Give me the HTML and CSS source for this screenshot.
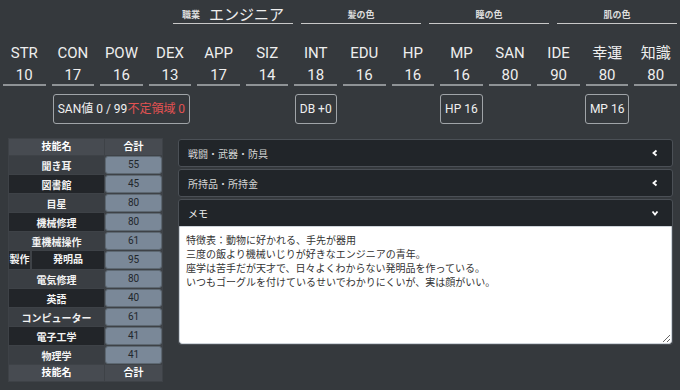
FILE: index.html
```html
<!DOCTYPE html>
<html lang="ja">
<head>
    <meta charset="UTF-8">
    <meta name="viewport" content="width=device-width, initial-scale=1.0">
    <title>キャラクターシート</title>
    <link rel="stylesheet" href="styles.css">
</head>
<body>

<div class="profile">
    <div class="field">
        <span class="field-label">職業</span>
        <span class="field-value">エンジニア</span>
    </div>
    <div class="field"><span class="field-label">髪の色</span></div>
    <div class="field"><span class="field-label">瞳の色</span></div>
    <div class="field"><span class="field-label">肌の色</span></div>
</div>

<div class="stats">
    <div class="stat"><div class="stat-name">STR</div><div class="stat-value">10</div></div>
    <div class="stat"><div class="stat-name">CON</div><div class="stat-value">17</div></div>
    <div class="stat"><div class="stat-name">POW</div><div class="stat-value">16</div></div>
    <div class="stat"><div class="stat-name">DEX</div><div class="stat-value">13</div></div>
    <div class="stat"><div class="stat-name">APP</div><div class="stat-value">17</div></div>
    <div class="stat"><div class="stat-name">SIZ</div><div class="stat-value">14</div></div>
    <div class="stat"><div class="stat-name">INT</div><div class="stat-value">18</div></div>
    <div class="stat"><div class="stat-name">EDU</div><div class="stat-value">16</div></div>
    <div class="stat"><div class="stat-name">HP</div><div class="stat-value">16</div></div>
    <div class="stat"><div class="stat-name">MP</div><div class="stat-value">16</div></div>
    <div class="stat"><div class="stat-name">SAN</div><div class="stat-value">80</div></div>
    <div class="stat"><div class="stat-name">IDE</div><div class="stat-value">90</div></div>
    <div class="stat"><div class="stat-name">幸運</div><div class="stat-value">80</div></div>
    <div class="stat"><div class="stat-name">知識</div><div class="stat-value">80</div></div>
</div>

<div class="badges">
    <div class="badge badge-san">SAN値 0 / 99<span class="danger">不定領域 0</span></div>
    <div class="badge badge-db">DB +0</div>
    <div class="badge badge-hp">HP 16</div>
    <div class="badge badge-mp">MP 16</div>
</div>

<div class="main">
    <table class="skills">
        <thead>
            <tr><th>技能名</th><th>合計</th></tr>
        </thead>
        <tbody>
            <tr class="light"><td class="name">聞き耳</td><td><div class="total">55</div></td></tr>
            <tr class="dark"><td class="name">図書館</td><td><div class="total">45</div></td></tr>
            <tr class="light"><td class="name">目星</td><td><div class="total">80</div></td></tr>
            <tr class="dark"><td class="name">機械修理</td><td><div class="total">80</div></td></tr>
            <tr class="light"><td class="name">重機械操作</td><td><div class="total">61</div></td></tr>
            <tr class="split">
                <td class="name"><div class="name-parts"><span class="kind">製作</span><span class="sub">発明品</span></div></td>
                <td><div class="total">95</div></td>
            </tr>
            <tr class="light"><td class="name">電気修理</td><td><div class="total">80</div></td></tr>
            <tr class="dark"><td class="name">英語</td><td><div class="total">40</div></td></tr>
            <tr class="light"><td class="name">コンピューター</td><td><div class="total">61</div></td></tr>
            <tr class="dark"><td class="name">電子工学</td><td><div class="total">41</div></td></tr>
            <tr class="light"><td class="name">物理学</td><td><div class="total">41</div></td></tr>
        </tbody>
        <tfoot>
            <tr><th>技能名</th><th>合計</th></tr>
        </tfoot>
    </table>

    <div class="accordion">
        <div class="acc-item">
            <div class="acc-header">
                <span>戦闘・武器・防具</span>
                <svg class="chevron" width="8" height="8" viewBox="0 0 8 8"><polyline points="5.5,1.5 2.5,4 5.5,6.5" fill="none" stroke="#fff" stroke-width="1.8"/></svg>
            </div>
        </div>
        <div class="acc-item">
            <div class="acc-header">
                <span>所持品・所持金</span>
                <svg class="chevron" width="8" height="8" viewBox="0 0 8 8"><polyline points="5.5,1.5 2.5,4 5.5,6.5" fill="none" stroke="#fff" stroke-width="1.8"/></svg>
            </div>
        </div>
        <div class="acc-item open">
            <div class="acc-header">
                <span>メモ</span>
                <svg class="chevron" width="8" height="8" viewBox="0 0 8 8"><polyline points="1.5,2.5 4,5.5 6.5,2.5" fill="none" stroke="#fff" stroke-width="1.8"/></svg>
            </div>
            <textarea class="memo" readonly>特徴表：動物に好かれる、手先が器用
三度の飯より機械いじりが好きなエンジニアの青年。
座学は苦手だが天才で、日々よくわからない発明品を作っている。
いつもゴーグルを付けているせいでわかりにくいが、実は顔がいい。</textarea>
        </div>
    </div>
</div>

</body>
</html>
```

FILE: styles.css
```css
body {
    margin: 0;
    background-color: #35393d;
    color: #eee;
    font-family: Roboto, "Noto Sans CJK JP", sans-serif;
}

/* profile line */
.profile {
    display: flex;
    justify-content: flex-end;
    gap: 8px;
    padding-right: 3px;
}
.field {
    box-sizing: border-box;
    width: 120px;
    height: 24px;
    padding-top: 6px;
    border-bottom: 1px solid #c8c8c8;
    display: flex;
    align-items: center;
    justify-content: center;
    gap: 9px;
}
.field-label {
    font-size: 9px;
    font-weight: bold;
    color: #ddd;
}
.field-value {
    font-size: 15px;
    line-height: 18px;
    color: #eee;
}

/* stats */
.stats {
    display: grid;
    grid-template-columns: repeat(14, 1fr);
    margin-top: 20px;
}
.stat {
    padding: 0 3px;
    text-align: center;
}
.stat-name {
    font-size: 15px;
    line-height: 18px;
}
.stat-value {
    margin-top: 4px;
    font-size: 15px;
    line-height: 18px;
    border-bottom: 2px solid #8f9396;
}

.badges {
    display: grid;
    grid-template-columns: repeat(14, 1fr);
    margin-top: 8px;
}
.badge {
    justify-self: center;
    box-sizing: border-box;
    height: 30px;
    line-height: 28px;
    padding: 0 4px;
    border: 1px solid #a0a4a8;
    border-radius: 3px;
    font-size: 12px;
    color: #f0f0f0;
}
.badge-san { grid-column: 1 / 6; }
.badge-db { grid-column: 6 / 9; }
.badge-hp { grid-column: 9 / 12; }
.badge-mp { grid-column: 12 / 15; }
.danger {
    color: #e35252;
}

/* lower part */
.main {
    display: flex;
    gap: 15px;
    padding: 0 7px 0 8px;
    margin-top: 14px;
}

.skills {
    width: 155px;
    flex-shrink: 0;
    border-collapse: separate;
    border-spacing: 1px;
    background-color: #3e4247;
    font-size: 10px;
    table-layout: fixed;
}
.skills th {
    height: 16px;
    padding: 0;
    background-color: #474b51;
    color: #fff;
    font-weight: bold;
    line-height: 16px;
}
.skills th:first-child {
    width: 95px;
}
.skills td {
    height: 18px;
    padding: 0;
    text-align: center;
}
.skills .name {
    font-weight: bold;
    color: #f2f2f2;
}
.skills .light .name {
    background-color: #3a3e43;
}
.skills .dark .name {
    background-color: #222529;
}
.name-parts {
    display: flex;
    gap: 2px;
    height: 18px;
    line-height: 18px;
}
.kind {
    width: 21px;
    background-color: #222529;
}
.sub {
    flex: 1;
    background-color: #222529;
}
.total {
    box-sizing: border-box;
    height: 18px;
    line-height: 16px;
    border: 1px solid #5d6872;
    border-radius: 3px;
    background-color: #7a8898;
    color: #22272c;
}

.accordion {
    flex: 1;
    display: flex;
    flex-direction: column;
    gap: 2px;
    margin-top: 1px;
}
.acc-item {
    border: 1px solid #4b5056;
    border-radius: 3px;
    background-color: #212529;
}
.acc-header {
    height: 26px;
    display: flex;
    align-items: center;
    justify-content: space-between;
    padding: 0 13px 0 9px;
    font-size: 10px;
    color: #d6d6d6;
}
.open .acc-header {
    color: #eee;
}
.memo {
    display: block;
    box-sizing: border-box;
    width: 100%;
    height: 118px;
    margin: 0;
    padding: 6px 6px;
    border: 1px solid #ced4da;
    border-radius: 0 0 3px 3px;
    background-color: #fff;
    color: #333;
    font-family: "Noto Sans CJK JP", sans-serif;
    font-size: 10px;
    line-height: 14px;
    outline: none;
}
```
